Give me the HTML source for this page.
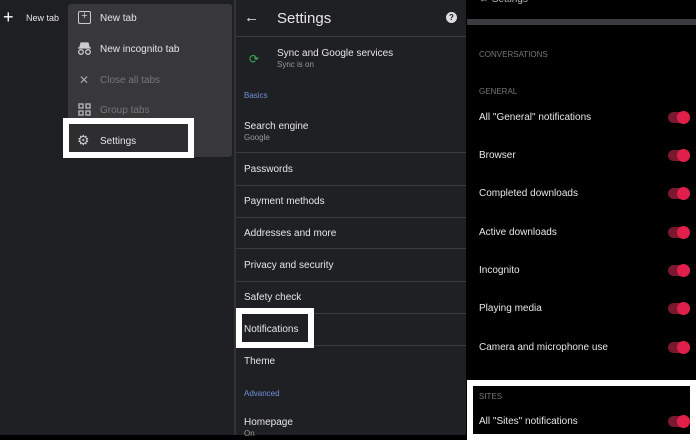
<!DOCTYPE html><html><head><style>
body{margin:0;width:696px;height:435px;overflow:hidden;background:#000;font-family:"Liberation Sans",sans-serif;position:relative}
div,span{position:absolute;box-sizing:border-box}
.t{color:#e6e6e6;font-size:10px;white-space:nowrap}
.s{color:#9a9a9a;font-size:8px}
.hl{border:6px solid #fff}
.dv{left:236px;width:230px;height:1px;background:#3a3b3e}
.tg{width:22px;height:11px;border-radius:6px;background:#7a1830;left:668px}
.tg::after{content:"";position:absolute;right:0;top:-1px;width:13px;height:13px;border-radius:50%;background:#e0204a}
.cap{color:#777;font-size:8px;left:479px}
</style></head><body>
<div style="left:0;top:0;width:234px;height:435px;background:#1e1f22"></div>
<div class="t" style="left:3px;top:8px;font-size:18px;color:#fff;line-height:18px">+</div>
<div class="t" style="left:26px;top:13px;font-size:9px">New tab</div>
<div style="left:68px;top:4px;width:164px;height:153px;background:#38383b;border-radius:3px"></div>
<div style="left:78px;top:11px;width:13px;height:13px;border:1.5px solid #ccc;border-radius:2px;color:#ccc;font-size:11px;line-height:9px;text-align:center">+</div>
<div class="t" style="left:100px;top:13px">New tab</div>
<svg style="position:absolute;left:77px;top:42px" width="15" height="14" viewBox="0 0 15 14"><path d="M4 1h7l1 4H3z M1 6h13" stroke="#ccc" fill="#ccc" stroke-width="1.2"/><circle cx="4" cy="10" r="2.3" stroke="#ccc" fill="none" stroke-width="1.3"/><circle cx="11" cy="10" r="2.3" stroke="#ccc" fill="none" stroke-width="1.3"/></svg>
<div class="t" style="left:100px;top:44px">New incognito tab</div>
<div class="t" style="left:79px;top:73px;color:#aaa;font-size:12px">✕</div>
<div class="t" style="left:100px;top:75px;color:#777">Close all tabs</div>
<svg style="position:absolute;left:78px;top:103px" width="13" height="13" viewBox="0 0 13 13" fill="none" stroke="#aaa" stroke-width="1.5"><rect x="1" y="1" width="4" height="4"/><rect x="8" y="1" width="4" height="4"/><rect x="1" y="8" width="4" height="4"/><rect x="8" y="8" width="4" height="4"/></svg>
<div class="t" style="left:100px;top:105px;color:#777">Group tabs</div>
<div class="hl" style="left:63px;top:118px;width:131px;height:40px;background:#2e2e31"></div>
<div class="t" style="left:77px;top:132px;color:#ccc;font-size:14px">⚙</div>
<div class="t" style="left:100px;top:136px">Settings</div>
<div style="left:234px;top:0;width:232px;height:435px;background:#1f2024;border-left:2px solid #333"></div>
<div class="t" style="left:244px;top:9px;font-size:15px">←</div>
<div class="t" style="left:277px;top:10px;font-size:15px">Settings</div>
<div style="left:446px;top:12px;width:11px;height:11px;border-radius:50%;background:#ddd;color:#111;font-size:8px;text-align:center;line-height:11px;font-weight:bold">?</div>
<div class="dv" style="top:36px"></div>
<div class="t" style="left:249px;top:52px;color:#3fae5a;font-size:12px">⟳</div>
<div class="t" style="left:277px;top:48px">Sync and Google services</div>
<div class="s" style="left:277px;top:60px">Sync is on</div>
<div class="t" style="left:244px;top:91px;color:#6d8fd8;font-size:8px">Basics</div>
<div class="t" style="left:244px;top:121px">Search engine</div>
<div class="s" style="left:244px;top:133px">Google</div>
<div class="dv" style="top:152px"></div><div class="dv" style="top:185px"></div><div class="dv" style="top:217px"></div><div class="dv" style="top:248px"></div><div class="dv" style="top:281px"></div><div class="dv" style="top:313px"></div><div class="dv" style="top:345px"></div>
<div class="t" style="left:244px;top:164px">Passwords</div>
<div class="t" style="left:244px;top:196px">Payment methods</div>
<div class="t" style="left:244px;top:228px">Addresses and more</div>
<div class="t" style="left:244px;top:260px">Privacy and security</div>
<div class="t" style="left:244px;top:292px">Safety check</div>
<div class="hl" style="left:236px;top:308px;width:78px;height:40px;background:#1f2024"></div>
<div class="t" style="left:244px;top:324px">Notifications</div>
<div class="t" style="left:244px;top:356px">Theme</div>
<div class="t" style="left:244px;top:389px;color:#6d8fd8;font-size:8px">Advanced</div>
<div class="t" style="left:244px;top:417px">Homepage</div>
<div class="s" style="left:244px;top:429px">On</div>
<div class="t" style="left:479px;top:-6px;color:#bbb">←  Settings</div>
<div style="left:467px;top:19px;width:229px;height:6px;background:#3a3c40"></div>
<div class="cap" style="top:50px">CONVERSATIONS</div>
<div class="cap" style="top:87px">GENERAL</div>
<div class="t" style="left:479px;top:112px">All "General" notifications</div><div class="tg" style="top:112px"></div>
<div class="t" style="left:479px;top:150px">Browser</div><div class="tg" style="top:150px"></div>
<div class="t" style="left:479px;top:188px">Completed downloads</div><div class="tg" style="top:188px"></div>
<div class="t" style="left:479px;top:227px">Active downloads</div><div class="tg" style="top:227px"></div>
<div class="t" style="left:479px;top:265px">Incognito</div><div class="tg" style="top:265px"></div>
<div class="t" style="left:479px;top:303px">Playing media</div><div class="tg" style="top:303px"></div>
<div class="t" style="left:479px;top:342px">Camera and microphone use</div><div class="tg" style="top:342px"></div>
<div class="hl" style="left:467px;top:380px;width:229px;height:60px;background:#000"></div>
<div class="cap" style="top:392px">SITES</div>
<div class="t" style="left:479px;top:416px">All "Sites" notifications</div><div class="tg" style="top:416px"></div>
</body></html>
